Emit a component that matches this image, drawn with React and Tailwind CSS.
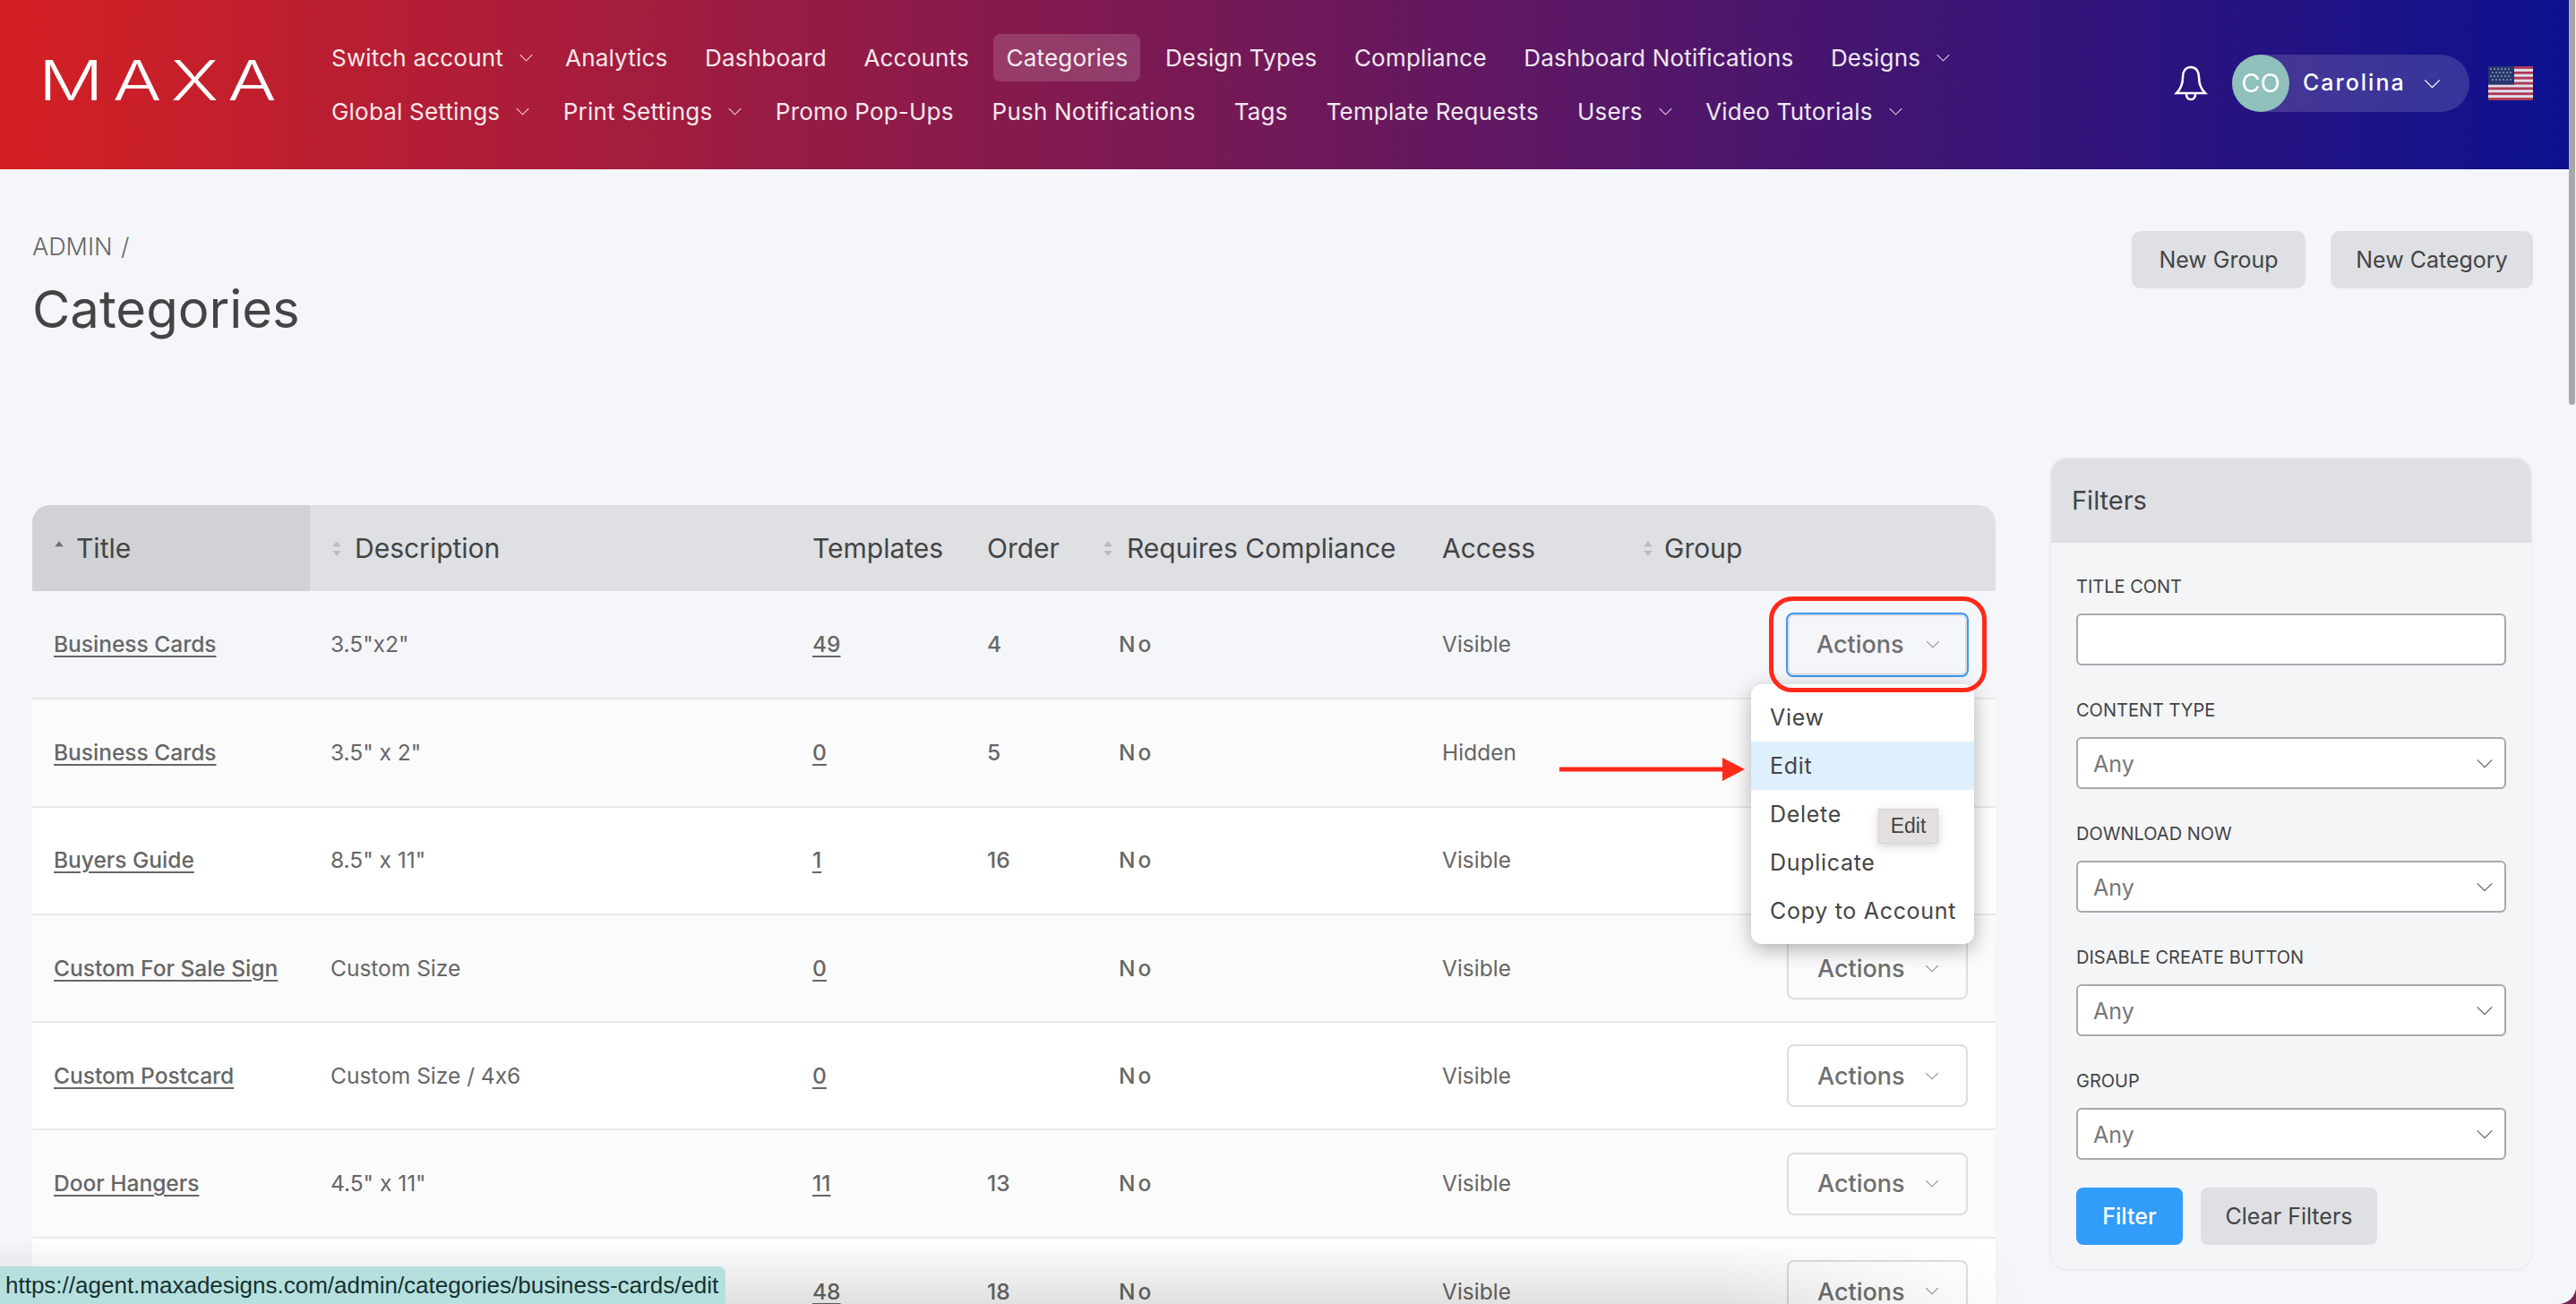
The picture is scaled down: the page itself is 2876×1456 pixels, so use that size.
const NAV_TOP = [
  { label: 'Switch account', caret: true },
  { label: 'Analytics' },
  { label: 'Dashboard' },
  { label: 'Accounts' },
  { label: 'Categories', active: true },
  { label: 'Design Types' },
  { label: 'Compliance' },
  { label: 'Dashboard Notifications' },
  { label: 'Designs', caret: true },
];

const NAV_BOTTOM = [
  { label: 'Global Settings', caret: true },
  { label: 'Print Settings', caret: true },
  { label: 'Promo Pop-Ups' },
  { label: 'Push Notifications' },
  { label: 'Tags' },
  { label: 'Template Requests' },
  { label: 'Users', caret: true },
  { label: 'Video Tutorials', caret: true },
];

const ROWS = [
  { title: 'Business Cards', desc: '3.5"x2"', templates: '49', order: '4', access: 'Visible', focused: true },
  { title: 'Business Cards', desc: '3.5" x 2"', templates: '0', order: '5', access: 'Hidden', hideAction: true },
  { title: 'Buyers Guide', desc: '8.5" x 11"', templates: '1', order: '16', access: 'Visible', hideAction: true },
  { title: 'Custom For Sale Sign', desc: 'Custom Size', templates: '0', order: '', access: 'Visible' },
  { title: 'Custom Postcard', desc: 'Custom Size / 4x6', templates: '0', order: '', access: 'Visible' },
  { title: 'Door Hangers', desc: '4.5" x 11"', templates: '11', order: '13', access: 'Visible' },
  { title: '', desc: '', templates: '48', order: '18', access: 'Visible' },
];

const FILTERS = ['CONTENT TYPE', 'DOWNLOAD NOW', 'DISABLE CREATE BUTTON', 'GROUP'];
const STRIPES = [0, 1, 2, 3, 4, 5, 6];
const STAR_ROWS = [3, 7, 11, 15];
const STAR_COLS = [3, 7, 11, 15, 19, 23];

function Caret({ className }) {
  return (
    <svg viewBox="0 0 20 12" fill="none" stroke="currentColor" strokeWidth="1.4" className={className}>
      <path d="M1 1.5 10 10.5 19 1.5" />
    </svg>
  );
}

function NavItem({ label, caret, active }) {
  return (
    <a className={`flex h-[53px] items-center rounded-lg px-[14px] text-[26px] tracking-[0.2px] text-white/90 whitespace-nowrap ${active ? 'bg-white/15' : ''}`}>
      {label}
      {caret && <Caret className="ml-[18px] mr-[-5.5px] w-[15px] h-[9px] text-white/80" />}
    </a>
  );
}

function Flag() {
  return (
    <svg viewBox="0 0 50 38" className="w-[50px] h-[38px]">
      <rect width="50" height="38" fill="#e0dfec" />
      {STRIPES.map((n) => (
        <rect key={n} y={n * 5.85} width="50" height="2.9" fill="#b03a54" />
      ))}
      <rect width="29" height="20.5" fill="#26386c" />
      {STAR_ROWS.map((y) => STAR_COLS.map((x) => (
        <circle key={`${x}-${y}`} cx={x + (y === 7 || y === 15 ? 2 : 0)} cy={y} r="0.8" fill="#d5d9e8" />
      )))}
    </svg>
  );
}

function SortIcon({ asc }) {
  return (
    <svg viewBox="0 0 10 16" className="w-[12px] h-[19px] shrink-0">
      <path d="M5 1 9 6H1Z" fill={asc ? '#6d6f74' : '#b9bbc0'} />
      {!asc && <path d="M5 15 9 10H1Z" fill="#b9bbc0" />}
    </svg>
  );
}

function ActionsButton({ focused }) {
  return (
    <button className={`flex items-center justify-between rounded-lg border-2 pl-[32px] pr-[30px] text-[27px] font-medium text-[#6f6f6f] ${focused ? 'mr-[-1px] h-[72px] w-[204px] border-[#3b99f0] shadow-[inset_0_0_0_2px_#dcdde1]' : 'h-[70px] w-[202px] border-[#dcdde1]'}`}>
      <span className="pt-[2px]">Actions</span>
      <Caret className="w-[16px] h-[9px] text-[#8a8a8a]" />
    </button>
  );
}

function FilterSelect({ label }) {
  return (
    <div className="mt-[35px]">
      <label className="block text-[20px] leading-[30px] text-[#444]">{label}</label>
      <div className="mt-[15px] flex h-[58px] items-center justify-between rounded-md border-2 border-[#a9a9ad] bg-white pl-[17px] pr-[10px]">
        <span className="pt-[3px] text-[25px] text-[#777]">Any</span>
        <Caret className="w-[24px] h-[11px] text-[#666]" />
      </div>
    </div>
  );
}

export default function App() {
  return (
    <div className="h-screen bg-[#7b2355]">
      <div className="relative h-full overflow-hidden rounded-br-[20px] bg-[#f5f6fa] font-['Inter',sans-serif] [font-feature-settings:'calt'_0]">
        {/* Header */}
        <header className="flex h-[189px] items-start bg-[linear-gradient(to_right,#d42023,#0c118f)]">
          <div className="w-[356px] pl-[43px] pt-[48px]">
            <span className="block origin-left scale-x-[1.3] text-[62px] font-light leading-[84px] tracking-[8px] text-white">MAXA</span>
          </div>
          <nav className="pt-[38px]">
            <div className="flex gap-[13.5px]">
              {NAV_TOP.map((item) => <NavItem key={item.label} {...item} />)}
            </div>
            <div className="mt-[7px] flex gap-[15px]">
              {NAV_BOTTOM.map((item) => <NavItem key={item.label} {...item} />)}
            </div>
          </nav>
          <div className="ml-auto mr-[48px] flex items-center pt-[61px]">
            <svg viewBox="0 0 38 40" fill="none" stroke="white" strokeWidth="2.6" className="w-[38px] h-[40px]">
              <path d="M19 2c-6 0-9 5-9 11 0 8-2 13-7 18h32c-5-5-7-10-7-18 0-6-3-11-9-11Z" />
              <path d="M14 32c0 4 2 6 5 6s5-2 5-6" />
            </svg>
            <div className="ml-[27px] flex h-[64px] w-[265px] items-center rounded-full bg-white/15">
              <span className="flex h-[64px] w-[64px] items-center justify-center rounded-full bg-[#8fc0bc] text-[29px] text-white">CO</span>
              <span className="ml-[15px] text-[25px] font-medium tracking-[2px] text-white">Carolina</span>
              <Caret className="ml-[20px] w-[19px] h-[11px] text-white" />
            </div>
            <div className="ml-[21px]"><Flag /></div>
          </div>
        </header>

        {/* Main */}
        <main className="flex pl-[36px] pr-[48px] pt-[69px]">
          <div className="w-[2192px] shrink-0">
            <p className="pt-[2px] text-[27px] leading-[32px] font-light text-[#666]">ADMIN <span className="ml-[2px]">/</span></p>
            <h1 className="mt-[20px] text-[58px] leading-[66px] text-[#444]">Categories</h1>

            <table className="mt-[186px] w-full table-fixed border-collapse text-[24.5px] text-[#666]">
              <colgroup>
                <col className="w-[310px]" />
                <col className="w-[537px]" />
                <col className="w-[195px]" />
                <col className="w-[147px]" />
                <col className="w-[361px]" />
                <col className="w-[228px]" />
                <col />
              </colgroup>
              <thead>
                <tr className="h-[96px] bg-[#dee0e4] text-left text-[30px] text-[#444]">
                  <th className="rounded-tl-[20px] bg-[#d0d2d6] pl-[24px] font-normal">
                    <div className="flex items-center gap-[13px]"><SortIcon asc />Title</div>
                  </th>
                  <th className="pl-[24px] font-normal">
                    <div className="flex items-center gap-[14px]"><SortIcon />Description</div>
                  </th>
                  <th className="pl-[24px] font-normal">Templates</th>
                  <th className="pl-[24px] font-normal">Order</th>
                  <th className="pl-[6px] font-normal">
                    <div className="flex items-center gap-[15px]"><SortIcon />Requires Compliance</div>
                  </th>
                  <th className="pl-[24px] font-normal">Access</th>
                  <th className="rounded-tr-[20px] pl-[20px] font-normal">
                    <div className="flex items-center gap-[12px]"><SortIcon />Group</div>
                  </th>
                </tr>
              </thead>
              <tbody>
                {ROWS.map((row, i) => (
                  <tr key={i} className={`h-[120.3px] border-b-2 border-[#e9e9eb] ${i === 0 ? 'bg-[#f5f6fa]' : i % 2 === 1 ? 'bg-[#fbfbfb]' : 'bg-white'}`}>
                    <td className="pl-[24px] font-medium underline underline-offset-4">{row.title}</td>
                    <td className="pl-[23px]">{row.desc}</td>
                    <td className="pl-[24px] font-medium underline underline-offset-4">{row.templates}</td>
                    <td className="pl-[24px] font-medium">{row.order}</td>
                    <td className="pl-[24px] font-medium tracking-[3px]">No</td>
                    <td className="pl-[24px]">{row.access}</td>
                    <td className="pr-[31px]">
                      <div className="flex justify-end">
                        {!row.hideAction && <ActionsButton focused={row.focused} />}
                      </div>
                    </td>
                  </tr>
                ))}
              </tbody>
            </table>
          </div>

          <div className="ml-[60px] flex-1">
            <div className="flex justify-end gap-[28px]">
              <button className="h-[64px] w-[194px] rounded-[10px] bg-[#dee0e4] pt-[2px] text-[25px] text-[#444]">New Group</button>
              <button className="h-[64px] w-[226px] rounded-[10px] bg-[#dee0e4] pt-[2px] text-[25px] text-[#444]">New Category</button>
            </div>

            {/* Filters */}
            <aside className="mt-[188px] h-[909px] overflow-hidden rounded-[20px] border-2 border-[#eeeff2] bg-[#f4f5f7]">
              <div className="flex h-[94px] items-center bg-[#dee0e4] pl-[23px] text-[29px] text-[#444]">Filters</div>
              <div className="px-[28px] pt-[34px]">
                <label className="block text-[20px] leading-[30px] text-[#444]">TITLE CONT</label>
                <input className="mt-[15px] block h-[58px] w-full rounded-md border-2 border-[#a9a9ad] bg-white" />
                {FILTERS.map((f) => <FilterSelect key={f} label={f} />)}
                <div className="mt-[31px] flex gap-[20px]">
                  <button className="h-[64px] w-[119px] rounded-lg bg-[#319cf9] pt-[2px] text-[25px] font-medium text-white">Filter</button>
                  <button className="h-[64px] w-[197px] rounded-lg bg-[#dee0e4] pt-[2px] text-[25px] text-[#444]">Clear Filters</button>
                </div>
              </div>
            </aside>
          </div>
        </main>

        {/* Open dropdown */}
        <div className="absolute left-[1955px] top-[764px] w-[249px] rounded-xl bg-white py-[10px] text-[25px] tracking-[0.7px] text-[#444] shadow-[0_6px_22px_rgba(0,0,0,0.3)]">
          {['View', 'Edit', 'Delete', 'Duplicate', 'Copy to Account'].map((label) => (
            <div key={label} className={`flex h-[54px] items-center pl-[21px] pt-[2px] whitespace-nowrap ${label === 'Edit' ? 'bg-[#dff0fd]' : ''}`}>{label}</div>
          ))}
        </div>

        {/* Browser tooltip */}
        <div className="absolute left-[2097px] top-[903px] flex h-[39px] w-[67px] items-center justify-center border border-[#d8d4d4] bg-[#e5e0e0] font-['Liberation_Sans',sans-serif] text-[23px] text-[#444] shadow-[0_3px_10px_rgba(0,0,0,0.18)]">Edit</div>

        {/* Annotation: red highlight and arrow */}
        <div className="absolute left-[1975px] top-[666px] h-[107px] w-[243px] rounded-[26px] border-[5px] border-[#ff2a1a]" />
        <svg viewBox="0 0 207 26" className="absolute left-[1741px] top-[846px] w-[207px] h-[26px]">
          <rect y="10.5" width="184" height="5" fill="#ff2a1a" />
          <path d="M182 0 207 13 182 26Z" fill="#ff2a1a" />
        </svg>

        {/* Bottom window shadow */}
        <div className="absolute bottom-0 left-0 h-[72px] w-[2260px] bg-gradient-to-t from-black/12 to-transparent [mask-image:linear-gradient(to_right,black_85%,transparent)]" />

        {/* Status bubble */}
        <div className="absolute bottom-0 left-0 flex h-[42px] w-[810px] items-center rounded-tr-lg bg-[#b5e0de] pl-[6px] font-['Liberation_Sans',sans-serif] text-[26px] text-[#163030] whitespace-nowrap">
          https://agent.maxadesigns.com/admin/categories/business-cards/edit
        </div>

        {/* Scrollbar */}
        <div className="absolute right-0 top-0 h-full w-[8px] bg-[#f5f6fa]">
          <div className="h-[452px] w-[7px] rounded-b-[4px] bg-[#a8a8a8]" />
        </div>
      </div>
    </div>
  );
}
